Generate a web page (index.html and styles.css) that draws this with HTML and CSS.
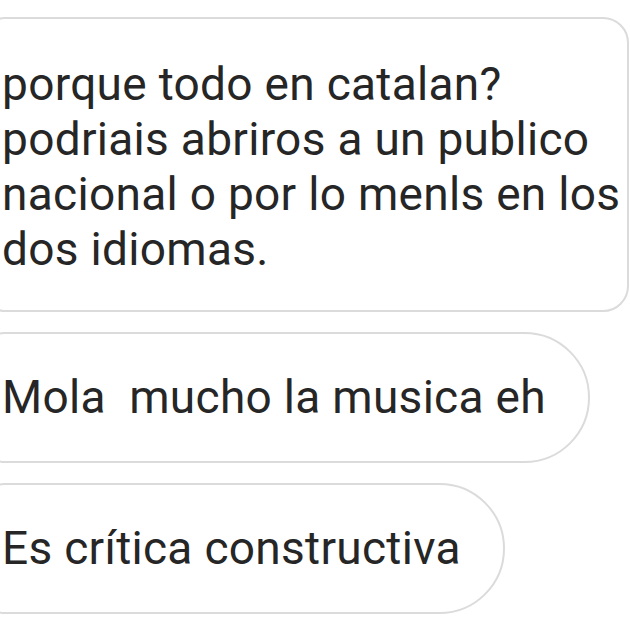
FILE: index.html
```html
<!DOCTYPE html>
<html lang="es">
<head>
    <meta charset="UTF-8">
    <meta name="viewport" content="width=device-width, initial-scale=1.0">
    <title>Mensajes</title>
    <link rel="stylesheet" href="styles.css">
</head>
<body>

<div class="thread">
    <div class="bubble long">porque todo en catalan?<br>podriais abriros a un publico<br>nacional o por lo menls en los<br>dos idiomas.</div>
    <div class="bubble">Mola  mucho la musica eh</div>
    <div class="bubble">Es crítica constructiva</div>
</div>

</body>
</html>
```

FILE: styles.css
```css
body {
    margin: 0;
    background-color: #fff;
    font-family: Roboto, "Liberation Sans", sans-serif;
    color: #262626;
    overflow: hidden;
}
.thread {
    display: flex;
    flex-direction: column;
    align-items: flex-start;
    gap: 20px;
    padding-top: 17px;
    margin-left: -10px;
}
.bubble {
    border: 2px solid #dbdbdb;
    border-radius: 14px 66px 66px 14px;
    padding: 36px 42px 36px 10px;
    font-size: 46px;
    line-height: 55px;
    letter-spacing: 0.3px;
    white-space: pre;
}
.bubble.long {
    align-self: stretch;
    margin-right: 1px;
    padding-top: 38px;
    padding-bottom: 33px;
    padding-right: 0;
    border-radius: 14px 26px 26px 14px;
}
```
